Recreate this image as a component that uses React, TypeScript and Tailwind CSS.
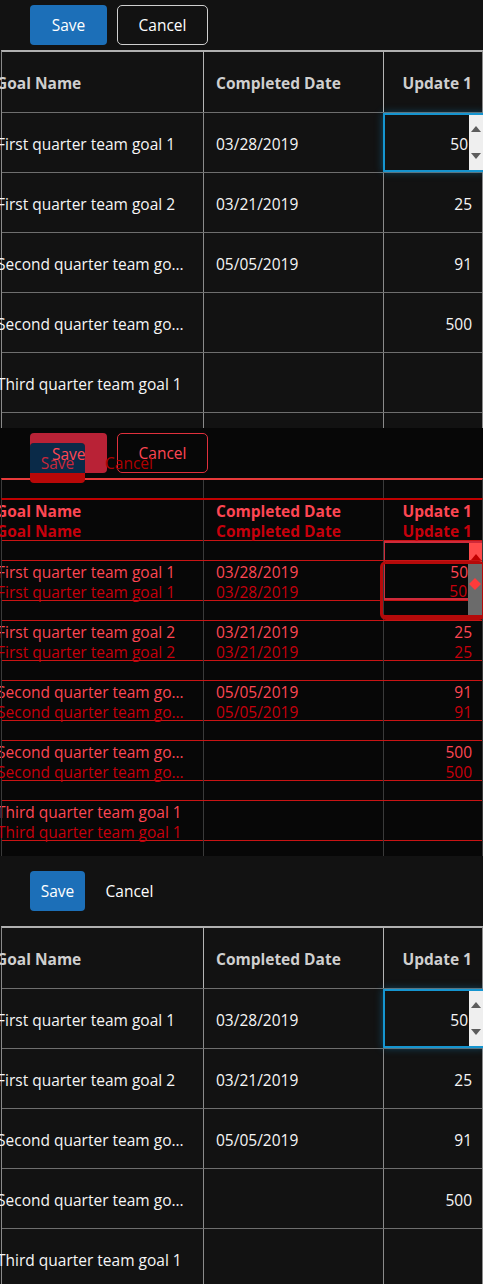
import React from "react";

type Theme = {
  frame: string;
  headV: string;
  bodyV: string;
  hLine: string;
  headText: string;
  bodyText: string;
};

type InputKind = "normal" | "ghostA" | "ghostB";

const rows = [
  { name: "First quarter team goal 1", date: "03/28/2019", val: "50", input: true },
  { name: "First quarter team goal 2", date: "03/21/2019", val: "25" },
  { name: "Second quarter team go...", date: "05/05/2019", val: "91" },
  { name: "Second quarter team go...", date: "", val: "500" },
  { name: "Third quarter team goal 1", date: "", val: "" },
  { name: "", date: "", val: "" },
];

const normalTheme: Theme = {
  frame: "border-t-[#b0b0b0] border-l-[#8a8a8a] border-r-[#8a8a8a]",
  headV: "border-r-[#b4b4b4]",
  bodyV: "border-r-[#8a8a8a]",
  hLine: "border-b-[#6e6e6e]",
  headText: "text-[#cfcfcf]",
  bodyText: "text-[#f6f6f6]",
};

const ghostATheme: Theme = {
  frame: "border-t-[#e83a3a] border-l-[#3a3a3a] border-r-[#3a3a3a]",
  headV: "border-r-[#3a3a3a]",
  bodyV: "border-r-[#3a3a3a]",
  hLine: "border-b-[#c81414]",
  headText: "text-[#ff4653]",
  bodyText: "text-[#ff4653]",
};

const ghostBTheme: Theme = {
  frame: "border-t-[#c00000] border-l-[#3a3a3a] border-r-[#3a3a3a]",
  headV: "border-r-[#3a3a3a]",
  bodyV: "border-r-[#3a3a3a]",
  hLine: "border-b-[#c81414]",
  headText: "text-[#c6000c]",
  bodyText: "text-[#c6000c]",
};

function Arrows({ color }: { color: string }) {
  return (
    <svg width="14" height="55" viewBox="0 0 14 55" className="block">
      <polygon points="2,17 7,11 12,17" fill={color} />
      <polygon points="2,38 12,38 7,44" fill={color} />
    </svg>
  );
}

function NumberInput({ kind, value }: { kind: InputKind; value: string }) {
  if (kind === "normal") {
    return (
      <div className="absolute top-0 bottom-0 -left-px -right-[3px] flex border-2 border-[#1595d0] bg-[#121212] shadow-[0_0_8px_rgba(21,149,208,0.45)]">
        <div className="flex flex-1 items-center justify-end pr-px pt-[2px] text-[#f6f6f6]">{value}</div>
        <div className="w-[14px] bg-[#efefef]">
          <Arrows color="#5c5c5c" />
        </div>
      </div>
    );
  }
  if (kind === "ghostA") {
    return (
      <div className="absolute top-0 bottom-0 -left-px -right-[3px] flex border-2 border-[#cf2a3a]">
        <div className="flex flex-1 items-center justify-end pr-px pt-[2px] text-[#ff4653]">{value}</div>
        <div className="w-[14px] bg-[#ff4b4b]">
          <Arrows color="#c00000" />
        </div>
      </div>
    );
  }
  return (
    <div className="absolute top-0 bottom-0 -left-[4px] -right-[3px] flex rounded-[6px] border-[3px] border-b-[5px] border-[#b40a0a]">
      <div className="flex flex-1 items-center justify-end pr-px pt-[2px] text-[#c6000c]">{value}</div>
      <div className="w-[14px] bg-[#6b6b6b]">
        <svg width="14" height="52" viewBox="0 0 14 52" className="block">
          <polygon points="7,14 13,20 7,26 1,20" fill="#ff3b3b" />
        </svg>
      </div>
    </div>
  );
}

function Table({ t, kind }: { t: Theme; kind: InputKind }) {
  return (
    <div className={`ml-px w-[482px] border-t-2 border-l border-r ${t.frame}`}>
      <div className={`flex h-[61px] border-b ${t.hLine} font-bold ${t.headText}`}>
        <div className={`flex w-[202px] shrink-0 items-center border-r pt-[2px] ${t.headV}`}>
          <span className="-ml-[6px] whitespace-nowrap">Goal Name</span>
        </div>
        <div className={`flex w-[180px] shrink-0 items-center border-r pl-[12px] pt-[2px] ${t.headV}`}>
          Completed Date
        </div>
        <div className="flex flex-1 items-center justify-end pr-[10px] pt-[2px]">Update 1</div>
      </div>
      {rows.map((r, i) => (
        <div key={i} className={`flex h-[60px] border-b ${t.hLine} ${t.bodyText}`}>
          <div className={`flex w-[202px] shrink-0 items-center border-r pt-[3px] ${t.bodyV}`}>
            <span className="-ml-[5px] whitespace-nowrap">{r.name}</span>
          </div>
          <div className={`flex w-[180px] shrink-0 items-center border-r pl-[12px] pt-[3px] ${t.bodyV}`}>
            {r.date}
          </div>
          <div className="relative flex flex-1 items-center justify-end pr-[10px] pt-[3px]">
            {r.input ? <NumberInput kind={kind} value={r.val} /> : r.val}
          </div>
        </div>
      ))}
    </div>
  );
}

function TopSection() {
  return (
    <div className="h-[428px] overflow-hidden bg-[#121212] pt-[5px]">
      <div className="flex pl-[30px]">
        <button className="h-[40px] w-[77px] rounded-[4px] bg-[#1c6fb8] text-white">Save</button>
        <button className="ml-[10px] h-[40px] w-[91px] rounded-[5px] border border-[#cfcfcf] text-white">
          Cancel
        </button>
      </div>
      <div className="mt-[5px]">
        <Table t={normalTheme} kind="normal" />
      </div>
    </div>
  );
}

function BottomSection() {
  return (
    <div className="h-[428px] overflow-hidden bg-[#121212] pt-[15px]">
      <div className="flex pl-[30px]">
        <button className="h-[40px] w-[55px] rounded-[4px] bg-[#1c6fb8] text-white">Save</button>
        <button className="ml-[10px] h-[40px] w-[69px] text-white">Cancel</button>
      </div>
      <div className="mt-[15px]">
        <Table t={normalTheme} kind="normal" />
      </div>
    </div>
  );
}

function DiffSection() {
  return (
    <div className="relative h-[428px] overflow-hidden bg-[#070707]">
      {/* layer A: the upper render, bright red */}
      <div className="absolute inset-0 pt-[5px]">
        <div className="flex pl-[30px]">
          <button className="h-[40px] w-[77px] rounded-[4px] bg-[#b92236] text-[#ff4653]">Save</button>
          <button className="ml-[10px] h-[40px] w-[91px] rounded-[5px] border border-[#e0303c] text-[#ff4653]">
            Cancel
          </button>
        </div>
        <div className="mt-[5px]">
          <Table t={ghostATheme} kind="ghostA" />
        </div>
      </div>
      {/* layer B: the lower render, dark red */}
      <div className="absolute inset-0 pt-[15px]">
        <div className="flex pl-[30px]">
          <div className="relative h-[40px] w-[55px] overflow-hidden rounded-[4px] bg-[#b80808]">
            <div className="h-[30px] bg-[#0a2a48]" />
            <span className="absolute left-[22px] top-[1px] text-[#ff4653]">Save</span>
            <span className="absolute left-0 right-0 top-[10px] text-center text-[#c9283b]">Save</span>
          </div>
          <span className="ml-[20px] flex h-[40px] items-center text-[#b00000]">Cancel</span>
        </div>
        <div className="mt-[15px]">
          <Table t={ghostBTheme} kind="ghostB" />
        </div>
      </div>
      <div className="absolute left-px top-[478px] h-[20px] w-px bg-[#e83a3a]" />
    </div>
  );
}

export default function App() {
  return (
    <div className="w-[483px] overflow-hidden font-['Open_Sans',sans-serif] text-[15.5px] leading-[20px]">
      <TopSection />
      <DiffSection />
      <BottomSection />
    </div>
  );
}
